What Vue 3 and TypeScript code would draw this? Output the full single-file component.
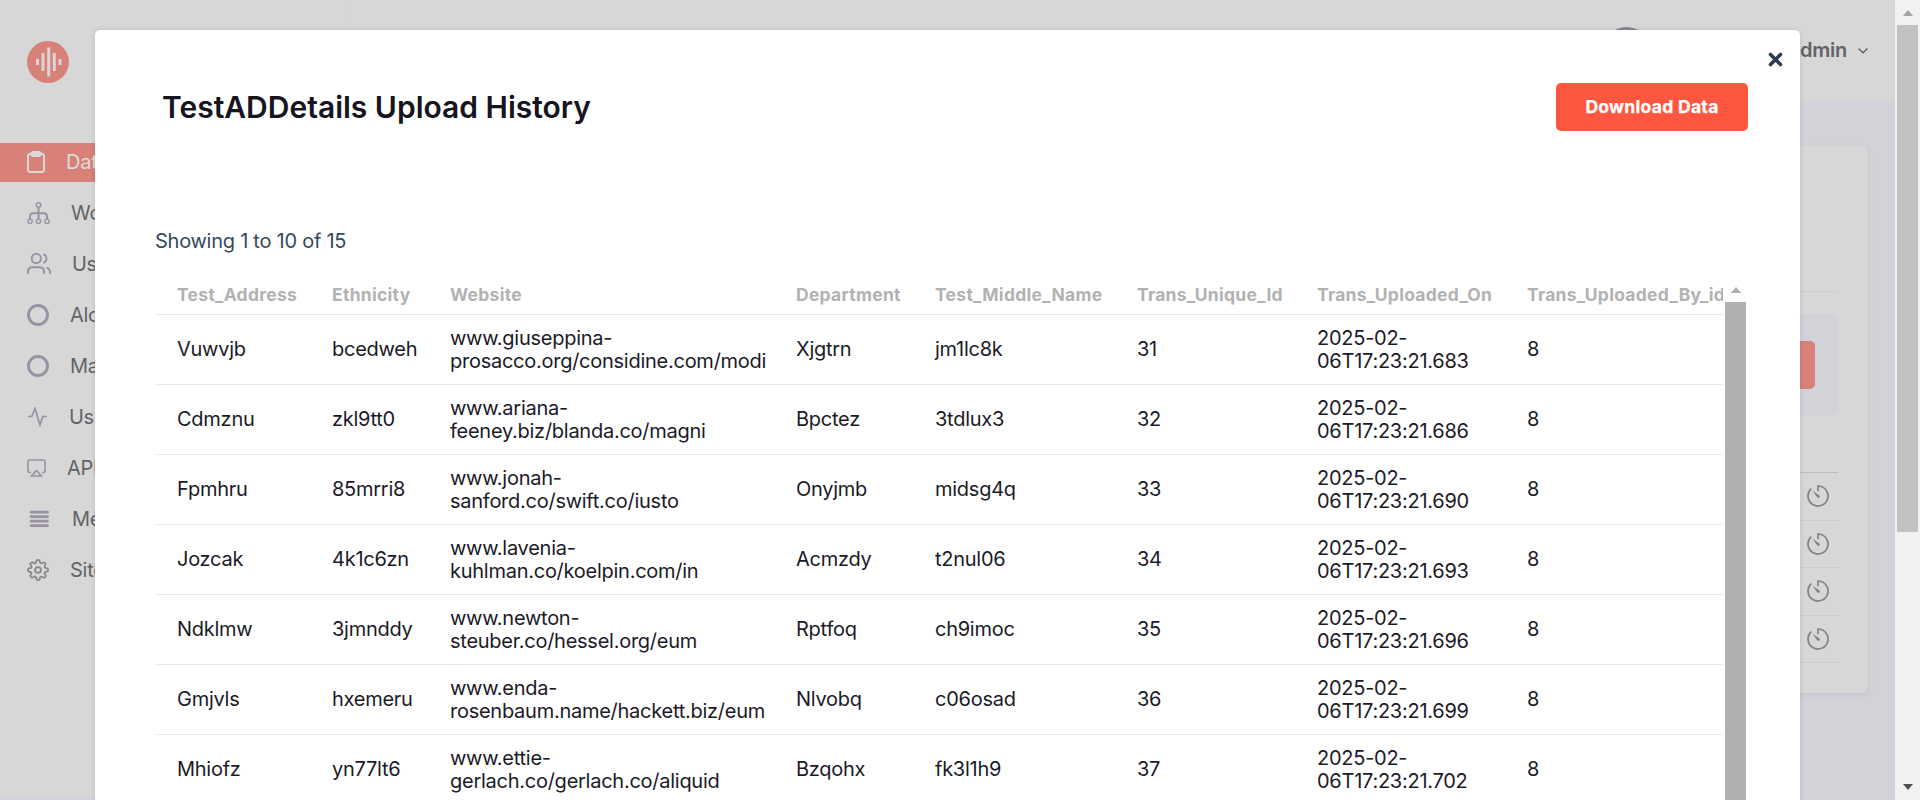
<script setup lang="ts">
interface NavItem { label: string; icon: string; gap: number; active?: boolean }
interface Row { address: string; ethnicity: string; site: string; dept: string; middle: string; id: number; ms: string }

const nav: NavItem[] = [
  { label: 'Data', icon: 'clipboard', gap: 66, active: true },
  { label: 'Workflow', icon: 'tree', gap: 71 },
  { label: 'Users', icon: 'users', gap: 72 },
  { label: 'Alchemy', icon: 'circle', gap: 70 },
  { label: 'Manage', icon: 'circle', gap: 70 },
  { label: 'Usage', icon: 'pulse', gap: 69 },
  { label: 'API', icon: 'cast', gap: 67 },
  { label: 'Menu', icon: 'menu', gap: 72 },
  { label: 'Site', icon: 'gear', gap: 70 },
]
const heads = ['Test_Address', 'Ethnicity', 'Website', 'Department', 'Test_Middle_Name', 'Trans_Unique_Id', 'Trans_Uploaded_On', 'Trans_Uploaded_By_id']
const rows: Row[] = [
  { address: 'Vuwvjb', ethnicity: 'bcedweh', site: 'www.giuseppina-\nprosacco.org/considine.com/modi', dept: 'Xjgtrn', middle: 'jm1lc8k', id: 31, ms: '683' },
  { address: 'Cdmznu', ethnicity: 'zkl9tt0', site: 'www.ariana-\nfeeney.biz/blanda.co/magni', dept: 'Bpctez', middle: '3tdlux3', id: 32, ms: '686' },
  { address: 'Fpmhru', ethnicity: '85mrri8', site: 'www.jonah-\nsanford.co/swift.co/iusto', dept: 'Onyjmb', middle: 'midsg4q', id: 33, ms: '690' },
  { address: 'Jozcak', ethnicity: '4k1c6zn', site: 'www.lavenia-\nkuhlman.co/koelpin.com/in', dept: 'Acmzdy', middle: 't2nul06', id: 34, ms: '693' },
  { address: 'Ndklmw', ethnicity: '3jmnddy', site: 'www.newton-\nsteuber.co/hessel.org/eum', dept: 'Rptfoq', middle: 'ch9imoc', id: 35, ms: '696' },
  { address: 'Gmjvls', ethnicity: 'hxemeru', site: 'www.enda-\nrosenbaum.name/hackett.biz/eum', dept: 'Nlvobq', middle: 'c06osad', id: 36, ms: '699' },
  { address: 'Mhiofz', ethnicity: 'yn77lt6', site: 'www.ettie-\ngerlach.co/gerlach.co/aliquid', dept: 'Bzqohx', middle: 'fk3l1h9', id: 37, ms: '702' },
]
</script>

<template>
  <div class="screen">
    <div class="page">
      <aside class="sidebar">
        <svg class="logo" viewBox="0 0 42 42">
          <circle cx="21" cy="21" r="21" fill="#d78178" />
          <path d="M10.500 18v6M16 12v18M21.700 6.500v29M27.300 12v18M33 18v6" stroke="#dbd6d5" stroke-width="3" />
        </svg>
        <nav class="nav">
          <div v-for="item in nav" :key="item.label" class="item" :class="{ active: item.active }">
            <div class="icon" :style="{ width: item.gap - 27 + 'px' }">
              <svg v-if="item.icon === 'clipboard'" width="18" height="22" viewBox="0 0 18 22" stroke-width="1.900"><rect x="1" y="3" width="16" height="18" rx="2.200" /><rect x="4.400" y="1" width="9.200" height="4" rx="1.800" /></svg>
              <svg v-else-if="item.icon === 'tree'" width="23" height="22" viewBox="0 0 23 22" stroke-width="1.400"><circle cx="11.500" cy="3" r="2.300" /><circle cx="3" cy="19.300" r="2.200" /><circle cx="11.500" cy="19.300" r="2.200" /><circle cx="20" cy="19.300" r="2.200" /><path d="M11.500 5.500V17M3 17v-2.500q0-3.300 3.300-3.300h10.400q3.300 0 3.300 3.300V17" stroke-width="2" /></svg>
              <svg v-else-if="item.icon === 'users'" width="24" height="22" viewBox="0 0 24 22" stroke-width="1.900"><circle cx="9.300" cy="5.500" r="4.600" /><path d="M1 21v-2.300Q1 14.300 5.300 14.300h7.400Q17 14.300 17 18.700V21M16.300 1.200a4.500 4.500 0 0 1 0 8.600M19.500 14.600Q23 15.400 23 19V21" /></svg>
              <svg v-else-if="item.icon === 'circle'" width="22" height="22" viewBox="0 0 22 22" stroke-width="2.900"><circle cx="11" cy="11" r="9.500" /></svg>
              <svg v-else-if="item.icon === 'pulse'" width="20" height="20" viewBox="0 0 20 20" stroke-width="1.700"><path d="M1 9.500h3.700L8 1.500l5 16.500 2.800-8.500H20" /></svg>
              <svg v-else-if="item.icon === 'cast'" width="19" height="18" viewBox="0 0 19 18" stroke-width="1.600"><path d="M4 13.500H3q-2 0-2-2V3q0-2 2-2h13q2 0 2 2v8.500q0 2-2 2h-1M9.500 11.500l5 5.500h-10z" /></svg>
              <svg v-else-if="item.icon === 'menu'" width="22" height="18" viewBox="0 0 22 18" stroke-width="2.700" stroke-linecap="round"><path d="M4 2.200h16.500M4 6.700h16.500M4 11.200h16.500M4 15.700h16.500" /></svg>
              <svg v-else class="gear" width="22" height="22" viewBox="0 0 24 24" stroke-width="1.900"><circle cx="12" cy="12" r="3.200" /><path d="M19.400 15a1.650 1.650 0 0 0 .33 1.820l.06.060a2 2 0 1 1-2.830 2.830l-.06-.060a1.650 1.650 0 0 0-2.800 1.170V21a2 2 0 0 1-4 0v-.090a1.650 1.650 0 0 0-2.900-1.260l-.06.060a2 2 0 1 1-2.830-2.830l.06-.060a1.650 1.650 0 0 0-1.170-2.800H3a2 2 0 0 1 0-4h.090a1.650 1.650 0 0 0 1.260-2.900l-.06-.060a2 2 0 1 1 2.830-2.830l.06.060a1.650 1.650 0 0 0 2.820-1.200V3a2 2 0 0 1 4 0v.090a1.650 1.650 0 0 0 2.800 1.170l.06-.060a2 2 0 1 1 2.830 2.830l-.06.060a1.650 1.650 0 0 0 1.200 2.820H21a2 2 0 0 1 0 4h-.090a1.650 1.650 0 0 0-1.510 1z" /></svg>
            </div>
            <span>{{ item.label }}</span>
          </div>
        </nav>
      </aside>
      <div class="main">
        <header class="topbar">
          <div class="avatar"></div>
          <span class="user">Admin</span>
          <svg width="12" height="8" viewBox="0 0 12 8"><path d="M1.500 1.500L6 5.800l4.500-4.300" fill="none" stroke="#66666a" stroke-width="1.500" /></svg>
        </header>
        <section class="card">
          <div class="card-head"></div>
          <div class="filter"><div class="filter-btn"></div></div>
          <div class="history">
            <div v-for="n in 4" :key="n" class="history-row">
              <svg width="22" height="22" viewBox="0 0 22 22" fill="none" stroke="#848484" stroke-width="1.700">
                <path d="M11 6.200V1a10 10 0 1 1-6.700 2.600" />
                <path d="M5.500 5.800l7 4.700a1.500 1.500 0 0 1-2.200 2z" fill="#848484" stroke="none" />
              </svg>
            </div>
          </div>
        </section>
      </div>
      <div class="bar">
        <div class="arrow-up"></div>
        <div class="thumb"></div>
        <div class="arrow-down"></div>
      </div>
    </div>

    <div class="modal">
      <svg class="close" viewBox="0 0 15 15"><path d="M2.500 2.500l10 10M12.500 2.500l-10 10" stroke="#2c3e50" stroke-width="3.600" stroke-linecap="round" /></svg>
      <div class="modal-head">
        <h1>TestADDetails Upload History</h1>
        <button>Download Data</button>
      </div>
      <p class="count">Showing 1 to 10 of 15</p>
      <div class="scroller">
        <div class="clip">
          <table>
            <colgroup><col class="c1" /><col class="c2" /><col class="c3" /><col class="c4" /><col class="c5" /><col class="c6" /><col class="c7" /><col class="c8" /></colgroup>
            <thead><tr><th v-for="h in heads" :key="h">{{ h }}</th></tr></thead>
            <tbody>
              <tr v-for="r in rows" :key="r.id">
                <td>{{ r.address }}</td>
                <td>{{ r.ethnicity }}</td>
                <td class="lines">{{ r.site }}</td>
                <td>{{ r.dept }}</td>
                <td>{{ r.middle }}</td>
                <td>{{ r.id }}</td>
                <td class="lines">{{ '2025-02-\n06T17:23:21.' + r.ms }}</td>
                <td>8</td>
              </tr>
            </tbody>
          </table>
        </div>
        <div class="inner-bar">
          <div class="inner-arrow"></div>
          <div class="inner-thumb"></div>
        </div>
      </div>
    </div>
  </div>
</template>

<style>
body { margin: 0; overflow: hidden; }
</style>

<style scoped>
.screen { position: relative; width: 1920px; height: 800px; overflow: hidden; font-family: Inter, "Liberation Sans", sans-serif; font-size: 20px; letter-spacing: -.26px; }
.screen * { box-sizing: border-box; }
.page { display: flex; height: 800px; background: #d2d3d8; }
.sidebar { width: 347px; height: 796px; padding-top: 41px; background: #d7d7d7; border-right: 1px solid #d4d4d4; }
.logo { display: block; width: 42px; height: 42px; margin-left: 27px; }
.nav { display: flex; flex-direction: column; gap: 12px; margin-top: 60px; }
.item { display: flex; align-items: center; height: 39px; padding-left: 27px; color: #636367; }
.item span { padding-bottom: 2px; }
.item.active { background: #d78178; color: #dddcdc; }
.icon { display: flex; align-items: center; flex: none; padding-bottom: 1px; }
.icon svg { fill: none; stroke: #9892a3; }
.active .icon svg { stroke: #dddcdc; }
.icon .gear { stroke: #88888a; }
.main { flex: 1; display: flex; flex-direction: column; }
.topbar { display: flex; align-items: center; justify-content: flex-end; height: 101px; padding-right: 26px; background: #d7d7d7; }
.avatar { width: 47px; height: 47px; margin-right: 136px; border-radius: 50%; background: #858799; }
.user { margin-right: 10px; padding-bottom: 2px; font-weight: 600; color: #636367; }
.card { width: 1460px; height: 547px; margin: 45px 27px 0 auto; padding-right: 30px; border-radius: 6px; background: #d7d7d7; box-shadow: 0 2px 5px rgba(100, 100, 130, .13); }
.card-head { height: 146px; border-bottom: 1px solid #cdcdcf; }
.filter { display: flex; align-items: center; justify-content: flex-end; height: 101px; margin-top: 22px; padding-right: 23px; border-radius: 6px; background: #d2d3d8; }
.filter-btn { width: 160px; height: 48px; border-radius: 5px; background: #d78178; }
.history { margin-top: 57px; border-top: 1px solid #bfbfc0; }
.history-row { display: flex; align-items: center; justify-content: flex-end; height: 47.600px; padding-right: 9px; border-bottom: 1px solid #cbcbcd; }
.bar { display: flex; flex-direction: column; align-items: center; width: 25px; padding: 10px 0; background: #f1f1f1; }
.arrow-up { border: 5.500px solid transparent; border-top: 0; border-bottom: 6px solid #a3a3a3; }
.thumb { width: 21px; height: 507px; margin-top: 9px; background: #c1c1c1; }
.arrow-down { margin-top: auto; border: 5.500px solid transparent; border-bottom: 0; border-top: 6px solid #505050; }
.modal { position: absolute; left: 95px; top: 30px; width: 1705px; height: 800px; padding: 53px 52px 0 60px; border-radius: 5px; background: #fff; box-shadow: 0 0 5px rgba(0, 0, 0, .12); }
.close { position: absolute; right: 17.500px; top: 21.500px; width: 15px; height: 15px; }
.modal-head { display: flex; align-items: center; justify-content: space-between; padding-left: 7px; }
h1 { margin: 0; font-size: 30px; line-height: 40px; font-weight: 600; letter-spacing: 0; color: #15141f; }
button { width: 192px; height: 48px; padding: 0 0 2px; border: 0; border-radius: 5px; background: #ff563f; color: #fff; font: 700 17.500px Inter, sans-serif; letter-spacing: .3px; -webkit-text-stroke: .25px #fff; }
.count { margin: 97px 0 0; line-height: 26px; color: #34495e; }
.scroller { display: flex; justify-content: space-between; height: 600px; margin-top: 21px; padding-right: 2px; }
.clip { width: 1568px; overflow: hidden; }
table { width: 1720px; table-layout: fixed; border-collapse: collapse; }
.c1 { width: 155px; } .c2 { width: 118px; } .c3 { width: 346px; } .c4 { width: 139px; }
.c5 { width: 202px; } .c6 { width: 180px; } .c7 { width: 210px; } .c8 { width: 370px; }
th, td { padding: 0 0 0 22px; border-bottom: 1px solid #e8e8f2; text-align: left; vertical-align: middle; white-space: nowrap; }
th { height: 39px; font-size: 17.500px; font-weight: 700; letter-spacing: .28px; color: #b2b2b2; }
td { height: 70px; line-height: 23px; color: #1b1a28; }
.lines { padding-top: 2px; white-space: pre; }
.inner-bar { display: flex; flex-direction: column; align-items: center; width: 21px; margin-top: 12px; }
.inner-arrow { border: 5.500px solid transparent; border-top: 0; border-bottom: 6px solid #b0b0b0; }
.inner-thumb { flex: 1; width: 21px; margin-top: 9px; background: #b0b0b0; }
</style>
